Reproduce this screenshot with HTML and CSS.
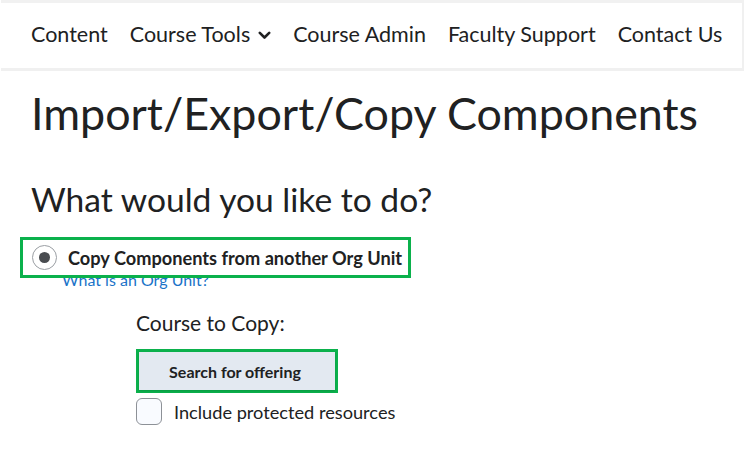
FILE: index.html
```html
<!DOCTYPE html>
<html>
<head>
<meta charset="utf-8">
<link rel="stylesheet" href="styles.css">
</head>
<body>
<div class="page">
  <nav class="topnav">
    <a class="nav-item">Content</a>
    <a class="nav-item">Course Tools
      <svg class="chev" width="13" height="9" viewBox="0 0 13 9"><path d="M1.8 1.8 L6.5 6.5 L11.2 1.8" fill="none" stroke="#202122" stroke-width="2.6" stroke-linecap="round" stroke-linejoin="round"/></svg>
    </a>
    <a class="nav-item">Course Admin</a>
    <a class="nav-item">Faculty Support</a>
    <a class="nav-item">Contact Us</a>
  </nav>
  <main class="content">
    <h1 class="title">Import/Export/Copy Components</h1>
    <h2 class="subtitle">What would you like to do?</h2>
    <div class="option">
      <div class="highlight radio-row">
        <span class="radio"><span class="dot"></span></span>
        <span class="radio-label">Copy Components from another Org Unit</span>
      </div>
      <a class="help-link">What is an Org Unit?</a>
    </div>
    <div class="copy-section">
      <div class="field-label">Course to Copy:</div>
      <div class="highlight btn-frame">
        <button class="btn">Search for offering</button>
      </div>
      <label class="check-row">
        <span class="checkbox"></span>
        <span class="check-label">Include protected resources</span>
      </label>
    </div>
  </main>
</div>
</body>
</html>
```
FILE: styles.css
```css
* { box-sizing: border-box; }
html, body { margin: 0; padding: 0; background: #fff; }
body { font-family: Lato, "Open Sans", sans-serif; color: #202122; }
.page { width: 745px; height: 449px; overflow: hidden; }
.topnav {
  margin: 3px 1px 0 1px;
  height: 68px;
  border-bottom: 3px solid #f0f0f0;
  border-right: 2px solid #f0f0f0;
  background: #fff;
  display: flex;
  align-items: center;
  gap: 22px;
  padding: 0 0 4px 30px;
  box-shadow: 0 -3px 0 #f1f1f1;
}
.nav-item { font-size: 21.5px; color: #202122; text-decoration: none; display: flex; align-items: center; gap: 8px; white-space: nowrap; }
.chev { margin-top: 3px; }
.content { padding: 0 0 0 31px; }
.title { font-size: 44.8px; font-weight: 400; margin: 13px 0 0 0; line-height: 58px; }
.subtitle { font-size: 33.6px; font-weight: 400; margin: 37px 0 0 0; line-height: 40px; }
.option { margin: 18px 0 0 -11px; position: relative; }
.highlight { border: 3px solid #0bb14c; }
.radio-row { display: inline-flex; align-items: center; gap: 11px; width: 391px; height: 41px; padding-left: 9px; position: relative; z-index: 1; background: transparent; }
.radio { width: 25px; height: 25px; border-radius: 50%; border: 1px solid #9a9ea3; display: flex; align-items: center; justify-content: center; background: #fff; }
.dot { width: 11px; height: 11px; border-radius: 50%; background: #494c50; }
.radio-label { font-size: 18.2px; font-weight: 700; color: #202122; white-space: nowrap; }
.help-link { display: block; margin: -8px 0 0 42px; font-size: 16px; color: #1a73c8; line-height: 19px; position: relative; }
.copy-section { margin: 21px 0 0 105px; }
.field-label { font-size: 21px; line-height: 25px; color: #202122; }
.btn-frame { width: 202px; height: 44px; margin-top: 14px; display: block; }
.btn { width: 100%; height: 100%; border: none; background: #e3e9f1; font-family: Lato, sans-serif; font-weight: 700; font-size: 16px; color: #202122; box-shadow: 0 1px 2px rgba(0,0,0,0.15); padding: 0 4px 0 0; }
.check-row { display: flex; align-items: center; gap: 12px; margin-top: 5px; }
.checkbox { width: 26px; height: 27px; border: 1px solid #8d9197; border-radius: 6px; background: #f9fbff; }
.check-label { font-size: 18.2px; color: #202122; }
```
